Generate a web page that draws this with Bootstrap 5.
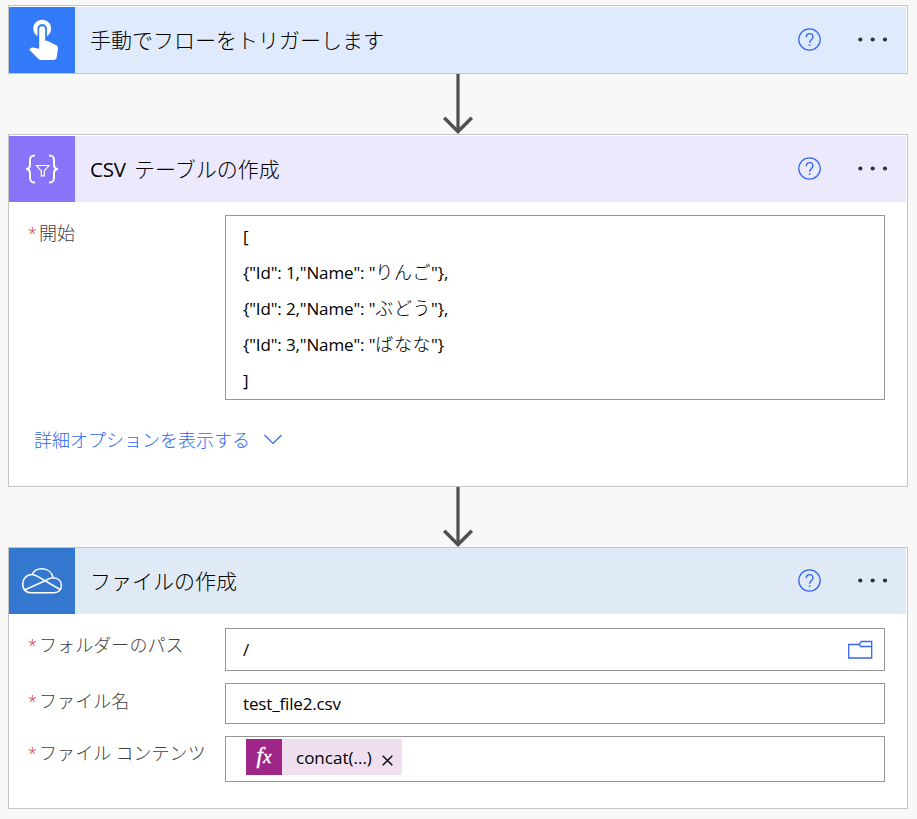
<!DOCTYPE html>
<html lang="ja">
<head>
<meta charset="utf-8">
<meta name="viewport" content="width=device-width, initial-scale=1">
<title>フロー</title>
<link href="https://cdn.jsdelivr.net/npm/bootstrap@5.3.0/dist/css/bootstrap.min.css" rel="stylesheet">
<style>
body{background:#f8f8f8;font-family:"Open Sans","Noto Sans CJK JP",sans-serif;color:#000;height:819px;overflow:hidden}
.flow{width:900px;margin-left:8px;padding-top:5px}
.step{background:#fff;border:1px solid #c4c4c4;padding-right:1px}
.step-a{height:69px;padding-top:1px}
.step-b{height:353px;padding-top:1px}
.step-c{height:262px}
.head{height:66px}
.step-a .head{background:#dfebfd}
.step-b .head{background:#ede9fd}
.step-c .head{background:#e0eaf6}
.tile{width:66px;height:66px}
.step-a .tile{background:#337af8}
.step-b .tile{background:#8774f8}
.step-c .tile{background:#3377cf}
.title{font-size:21px;line-height:30px;margin-left:15px;padding-bottom:2px;font-weight:300;font-family:"Noto Sans CJK JP",sans-serif;white-space:nowrap}
.title .lat{font-family:"Open Sans",sans-serif;font-weight:400;font-size:20.5px;letter-spacing:-.2px;margin-right:3px}
.tools{margin-right:18px;padding-bottom:2px;gap:37px}
.link-arrow{height:60px}
.lbl{width:197px;font-size:18px;line-height:26px;letter-spacing:.08px;color:#404040;font-weight:300;font-family:"Noto Sans CJK JP",sans-serif;white-space:nowrap}
.lbl i{color:#d13438;font-style:normal;font-weight:300;font-size:16px;line-height:20px;width:11px;display:inline-block;vertical-align:1px;font-family:"Open Sans",sans-serif}
.line-in{padding:12px 0 0 19px}
.line-in.first-b{padding-top:13px}
.line-in.first-c{padding-top:14px}
.first-c .lbl,.last-c .lbl{margin-top:-1px}
.box{width:660px;border:1px solid #969696;background:#fff;font-size:17px;padding-left:17px;white-space:nowrap}
.code{height:185px;line-height:36px;padding-top:3px;letter-spacing:-.14px}
.code>div{height:36px}
.code b{font-weight:300;font-size:18px;line-height:18px;letter-spacing:.6px;font-family:"Noto Sans CJK JP",sans-serif}
.path-box{height:43px;padding-right:11px}
.name-box{height:41px;letter-spacing:-.15px}
.body-box{height:46px;padding-top:2px}
.more{color:#2f66f0;font-size:18px;line-height:26px;font-weight:300;margin:26px 0 0 25px;gap:14px;font-family:"Noto Sans CJK JP",sans-serif}
.chip{width:156px;height:36px;background:#f0dfee;margin-left:3px}
.chip-name{margin:1px 0 0 14px}
.chip-x{margin:6px 0 0 10px}
.fx{width:36px;height:36px;background:#9f2588;color:#fff;font:italic 400 23px/34px "Liberation Serif",serif;text-align:center;-webkit-text-stroke:.4px #fff}
.fx small{font-size:19px}
</style>
</head>
<body>
<svg width="0" height="0" class="position-absolute">
<defs>
<g id="help" fill="none" stroke="#3566f5"><circle cx="11.5" cy="11.5" r="10.7" stroke-width="1.25"/><path d="M8.2 9.2C8.2 7 9.6 5.6 11.6 5.6s3.3 1.3 3.3 3.1c0 2.8-3.3 3.1-3.3 6.1" stroke-width="1.4"/><path d="M11.6 16.3v1.6" stroke-width="1.6"/></g>
<g id="dots" fill="#303030"><circle cx="2.3" cy="2.5" r="2.1"/><circle cx="14.7" cy="2.5" r="2.1"/><circle cx="27" cy="2.5" r="2.1"/></g>
<g id="down" fill="none" stroke="#505050"><path d="M15 0V57" stroke-width="3.2"/><path d="M1.200 43.700 15 57.500 28.800 43.700" stroke-width="3.4"/></g>
</defs>
</svg>
<main class="flow d-flex flex-column">
  <section class="step step-a">
    <div class="head d-flex align-items-center">
      <div class="tile flex-shrink-0"><svg width="66" height="66" viewBox="0 0 66 66" fill="#fff"><path d="M28.5 29.2a8.9 8.9 0 1 1 9.4 0v-5.400a5 5 0 1 0-9.400 0z"/><path d="M30.200 22.200a3 3 0 0 1 6 0v11.600h2l9.100 4.400c1.400.8 1.900 1.800 1.700 3.300l-1.300 8.700c-.3 1.800-1.300 2.800-3 2.800H32c-1 0-1.800-.4-2.500-1.100L20.300 42.700l1.300-1.500c.6-.6 1.300-.8 2.200-.6l6.400 1.200z"/></svg></div>
      <div class="title flex-grow-1">手動でフローをトリガーします</div>
      <div class="tools d-flex align-items-center"><svg width="23" height="23"><use href="#help"/></svg><svg width="30" height="5"><use href="#dots"/></svg></div>
    </div>
  </section>
  <div class="link-arrow"><svg class="d-block mx-auto" width="30" height="60"><use href="#down"/></svg></div>
  <section class="step step-b">
    <div class="head d-flex align-items-center">
      <div class="tile flex-shrink-0"><svg width="66" height="66" fill="none" stroke="#fff" stroke-width="2"><path d="M26 19.500c-4 0-5 1.500-5 5v4c0 3-1 4.500-4 4.500 3 0 4 1.500 4 4.500v4c0 3.500 1 5 5 5M40 19.500c4 0 5 1.500 5 5v4c0 3 1 4.500 4 4.500-3 0-4 1.500-4 4.500v4c0 3.500-1 5-5 5"/><path d="M27.500 29.500h12.500l-4.700 5.400v5h-3v-5z" stroke-width="1.200"/></svg></div>
      <div class="title flex-grow-1"><span class="lat">CSV </span>テーブルの作成</div>
      <div class="tools d-flex align-items-center"><svg width="23" height="23"><use href="#help"/></svg><svg width="30" height="5"><use href="#dots"/></svg></div>
    </div>
    <div class="line-in first-b d-flex">
      <div class="lbl pt-1"><i>*</i>開始</div>
      <div class="box code"><div>[</div><div>{"Id": 1,"Name": "<b>りんご</b>"},</div><div>{"Id": 2,"Name": "<b>ぶどう</b>"},</div><div>{"Id": 3,"Name": "<b>ばなな</b>"}</div><div>]</div></div>
    </div>
    <div class="more d-flex align-items-center"><span>詳細オプションを表示する</span><svg width="18" height="11" fill="none" stroke="#3566f5" stroke-width="1.200"><path d="M.5 1 9 9.500 17.500 1"/></svg></div>
  </section>
  <div class="link-arrow"><svg class="d-block mx-auto" width="30" height="60"><use href="#down"/></svg></div>
  <section class="step step-c">
    <div class="head d-flex align-items-center">
      <div class="tile flex-shrink-0"><svg width="66" height="66" fill="none" stroke="#fff" stroke-width="1.600" stroke-linejoin="round"><path d="M21.500 44.700c-5 0-7.800-4-7.800-8.500 0-5.500 4-9.700 9.300-9.700 2-4 5.600-5.700 9.800-5.700 5.800 0 10.200 3.600 11.400 9 5 .2 8.200 3.400 8.200 7.800 0 4.300-3 7.100-7.200 7.100z"/><path d="M23 26.500c1.500 0 3 .4 5.500 1.900L51 41.500M44.200 29.800c-2.200-.2-3.500.5-7.500 2.600L16 41.700"/></svg></div>
      <div class="title flex-grow-1">ファイルの作成</div>
      <div class="tools d-flex align-items-center"><svg width="23" height="23"><use href="#help"/></svg><svg width="30" height="5"><use href="#dots"/></svg></div>
    </div>
    <div class="line-in first-c d-flex">
      <div class="lbl pt-1"><i>*</i>フォルダーのパス</div>
      <div class="box path-box d-flex align-items-center justify-content-between"><span>/</span><svg width="25" height="19" fill="none" stroke="#3566f5" stroke-width="1.300"><path d="M.7 4.500h10.500l2-3h10.500v16.500H.7zM11.200 4.500l1.500 2h11"/></svg></div>
    </div>
    <div class="line-in d-flex">
      <div class="lbl pt-1"><i>*</i>ファイル名</div>
      <div class="box name-box d-flex align-items-center"><span>test_file2.csv</span></div>
    </div>
    <div class="line-in last-c d-flex">
      <div class="lbl pt-1"><i>*</i>ファイル コンテンツ</div>
      <div class="box body-box d-flex"><div class="chip d-flex align-items-center"><div class="fx">f<small>x</small></div><span class="chip-name">concat(...)</span><svg class="chip-x" width="11" height="11" stroke="#111" stroke-width="1.500"><path d="M.7.7 10.300 10.300M10.300.7.7 10.300"/></svg></div></div>
    </div>
  </section>
</main>
<script src="https://cdn.jsdelivr.net/npm/bootstrap@5.3.0/dist/js/bootstrap.bundle.min.js"></script>
</body>
</html>
